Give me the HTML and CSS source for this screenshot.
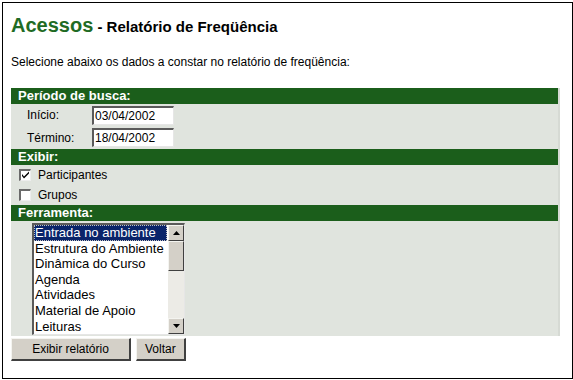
FILE: index.html
```html
<!DOCTYPE html>
<html>
<head>
<meta charset="utf-8">
<link rel="stylesheet" href="styles.css">
</head>
<body>
<div class="page">
  <h1 class="title"><span class="t-main">Acessos</span><span class="t-sub"> - Relatório de Freqüência</span></h1>
  <p class="intro">Selecione abaixo os dados a constar no relatório de freqüência:</p>
  <div class="form">
    <div class="bar">Período de busca:</div>
    <div class="row date-row">
      <span class="lbl">Início:</span>
      <span class="input">03/04/2002</span>
    </div>
    <div class="row date-row">
      <span class="lbl">Término:</span>
      <span class="input">18/04/2002</span>
    </div>
    <div class="bar">Exibir:</div>
    <div class="row check-row">
      <span class="check checked"><svg width="9" height="9" viewBox="0 0 9 9"><path d="M1 3 L3 5.5 L8 0.5 L8 2.5 L3 7.5 L1 5 Z" fill="#000"/></svg></span>
      <span>Participantes</span>
    </div>
    <div class="row check-row">
      <span class="check"></span>
      <span>Grupos</span>
    </div>
    <div class="bar">Ferramenta:</div>
    <div class="row list-row">
      <div class="listbox">
        <ul class="items">
          <li class="sel"><span>Entrada no ambiente</span></li>
          <li>Estrutura do Ambiente</li>
          <li>Dinâmica do Curso</li>
          <li>Agenda</li>
          <li>Atividades</li>
          <li>Material de Apoio</li>
          <li>Leituras</li>
        </ul>
        <div class="scroll">
          <div class="sbtn"><svg width="7" height="4" viewBox="0 0 7 4"><path d="M3.5 0 L7 4 L0 4 Z" fill="#000"/></svg></div>
          <div class="thumb"></div>
          <div class="track"></div>
          <div class="sbtn"><svg width="7" height="4" viewBox="0 0 7 4"><path d="M0 0 L7 0 L3.5 4 Z" fill="#000"/></svg></div>
        </div>
      </div>
    </div>
  </div>
  <div class="buttons">
    <span class="btn btn-wide">Exibir relatório</span>
    <span class="btn">Voltar</span>
  </div>
</div>
</body>
</html>
```
FILE: styles.css
```css
html, body {
  margin: 0;
  padding: 0;
  background: #fff;
}
body {
  font-family: "Liberation Sans", Arial, sans-serif;
  font-size: 12px;
  color: #000;
}
.page {
  box-sizing: border-box;
  width: 571px;
  height: 377px;
  margin: 2px 0 0 2px;
  border: 1px solid #000;
  padding: 8px 12px 0 8px;
}
.title {
  margin: 0;
  height: 26px;
  line-height: 26px;
  font-weight: bold;
}
.t-main {
  font-size: 20px;
  color: #1f6b24;
}
.t-sub {
  font-size: 15px;
  color: #000;
}
.intro {
  margin: 18px 0 0 0;
  line-height: 15px;
  height: 15px;
}
.form {
  margin-top: 18px;
  background: #e0e4de;
  border-right: 2px solid #d6dad4;
}
.bar {
  background: #1b5e1b;
  color: #fff;
  font-weight: bold;
  font-size: 13px;
  line-height: 16px;
  height: 16px;
  padding-left: 7px;
}
.row {
  display: flex;
  align-items: center;
}
.date-row {
  height: 22px;
  padding-left: 16px;
}
.date-row + .date-row {
  height: 23px;
}
.lbl {
  width: 65px;
}
.input {
  box-sizing: border-box;
  width: 82px;
  height: 19px;
  background: #fff;
  border-top: 2px solid #5a5a5a;
  border-left: 2px solid #5a5a5a;
  border-right: 1px solid #e6e6e6;
  border-bottom: 1px solid #e6e6e6;
  padding-left: 1px;
  line-height: 16px;
}
.check-row {
  height: 20px;
  padding-left: 8px;
  gap: 7px;
}
.check-row + .check-row {
  height: 20px;
}
.check {
  box-sizing: border-box;
  width: 12px;
  height: 12px;
  background: #fff;
  border-top: 2px solid #6a6a6a;
  border-left: 2px solid #6a6a6a;
  border-right: 1px solid #eee;
  border-bottom: 1px solid #eee;
  display: flex;
  align-items: center;
  justify-content: center;
}
.check svg {
  display: block;
}
.list-row {
  padding: 2px 0 2px 21px;
  height: 115px;
  box-sizing: border-box;
  align-items: flex-start;
}
.listbox {
  box-sizing: border-box;
  width: 153px;
  height: 112px;
  background: #fff;
  border-top: 2px solid #5a5a5a;
  border-left: 2px solid #5a5a5a;
  border-right: 1px solid #e6e6e6;
  border-bottom: 1px solid #e6e6e6;
  display: flex;
}
.items {
  list-style: none;
  margin: 0;
  padding: 0;
  flex: 1;
  font-size: 13px;
  line-height: 15.6px;
  overflow: hidden;
}
.items li {
  padding-left: 1px;
  white-space: nowrap;
}
.items li.sel {
  padding: 0;
}
.items li.sel span {
  display: block;
  background: #0a246a;
  color: #fff;
  outline: 1px dotted #c0c0c0;
  outline-offset: -1px;
  padding-left: 1px;
  margin-right: 1px;
}
.scroll {
  width: 16px;
  display: flex;
  flex-direction: column;
  background: #f0efeb;
}
.sbtn {
  box-sizing: border-box;
  height: 16px;
  background: #d4d0c8;
  border-top: 1px solid #f4f4f0;
  border-left: 1px solid #f4f4f0;
  border-right: 1px solid #404040;
  border-bottom: 1px solid #404040;
  display: flex;
  align-items: center;
  justify-content: center;
}
.thumb {
  box-sizing: border-box;
  height: 30px;
  background: #d4d0c8;
  border-top: 1px solid #f4f4f0;
  border-left: 1px solid #f4f4f0;
  border-right: 1px solid #404040;
  border-bottom: 1px solid #404040;
}
.track {
  flex: 1;
  background: #ecebe6;
}
.buttons {
  display: flex;
  gap: 5px;
  margin-top: 2px;
}
.btn {
  box-sizing: border-box;
  height: 23px;
  padding: 0 8px;
  background: #d4d0c8;
  border-top: 1px solid #f4f4f0;
  border-left: 1px solid #f4f4f0;
  border-right: 2px solid #404040;
  border-bottom: 2px solid #404040;
  display: flex;
  align-items: center;
  justify-content: center;
  font-size: 12px;
}
.btn-wide {
  width: 120px;
}
```
